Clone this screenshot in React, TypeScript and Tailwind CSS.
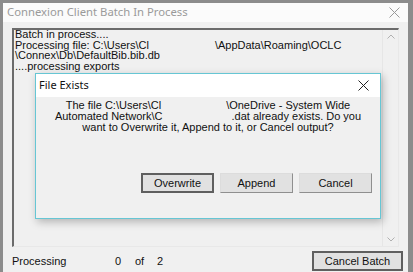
const ui = { fontFamily: '"Liberation Sans", Arial, sans-serif' };
const seg = { fontFamily: '"Noto Sans", "Open Sans", sans-serif' };

function CloseX({ className }: { className?: string }) {
  return (
    <svg width="11" height="11" viewBox="0 0 11 11" className={className}>
      <path d="M0.5 0.5 L10.5 10.5 M10.5 0.5 L0.5 10.5" stroke="currentColor" strokeWidth="1" />
    </svg>
  );
}

function WinButton({ label, primary = false, className = "" }: { label: string; primary?: boolean; className?: string }) {
  return (
    <button
      className={
        "flex h-[20px] items-center justify-center bg-[#e1e1e1] text-[11px] text-[#111] " +
        (primary
          ? "border-2 border-[#5f5f5f] "
          : "border border-t-[#dcdcdc] border-l-[#dcdcdc] border-r-[#8f8f8f] border-b-[#8f8f8f] ") +
        className
      }
      style={ui}
    >
      {label}
    </button>
  );
}

export default function App() {
  return (
    <div className="relative flex h-[272px] w-[413px] flex-col overflow-hidden border-l-[3px] border-r-[5px] border-t-[3px] border-[#8c8c8c] bg-[#f0f0f0]">
      {/* title bar */}
      <div className="flex h-[19px] items-center justify-between bg-[#fbfbfb] pl-[4px] pr-[8px]">
        <span className="text-[11.3px] text-[#9a9a9a]" style={seg}>
          Connexion Client Batch In Process
        </span>
        <CloseX className="text-[#9a9a9a]" />
      </div>

      {/* log box */}
      <div className="mx-[9px] mt-[6px] flex h-[219px] border-l-2 border-t-2 border-[#6b6b6b] border-r border-b border-r-[#e8e8e8] border-b-[#e8e8e8]">
        <div className="-mt-[1px] flex-1 pl-[1px] text-[11px] leading-[10.6px] text-[#111]" style={ui}>
          <div>Batch in process....</div>
          <div>
            Processing file: C:\Users\Cl<span className="inline-block w-[66px]" />\AppData\Roaming\OCLC
          </div>
          <div>\Connex\Db\DefaultBib.bib.db</div>
          <div>....processing exports</div>
        </div>
        <div className="flex w-[16px] flex-col items-center justify-between border-l border-[#e6e6e6] py-[4px] text-[#b0b0b0]">
          <svg width="8" height="5" viewBox="0 0 8 5">
            <path d="M0.5 4.5 L4 1 L7.5 4.5" fill="none" stroke="currentColor" strokeWidth="1" />
          </svg>
          <svg width="8" height="5" viewBox="0 0 8 5">
            <path d="M0.5 0.5 L4 4 L7.5 0.5" fill="none" stroke="currentColor" strokeWidth="1" />
          </svg>
        </div>
      </div>

      {/* status row */}
      <div className="mt-[4px] flex items-center pl-[9px] pr-[5px] text-[11px] text-[#111]" style={ui}>
        <span className="w-[103px]">Processing</span>
        <span className="w-[20px]">0</span>
        <span className="w-[22px]">of</span>
        <span>2</span>
        <WinButton label="Cancel Batch" primary className="ml-auto w-[91px]" />
      </div>

      {/* modal dialog */}
      <div className="absolute left-[32px] top-[70px] flex h-[146px] w-[346px] flex-col border border-[#66c6d4] bg-[#f0f0f0] shadow-[2px_3px_8px_rgba(0,0,0,0.25)]">
        <div className="flex h-[23px] items-center justify-between bg-white pl-[3px] pr-[11px]">
          <span className="text-[11px] text-[#111]" style={seg}>
            File Exists
          </span>
          <CloseX className="text-[#222]" />
        </div>
        <div className="mt-[3px] text-center text-[11px] leading-[11px] text-[#111]" style={ui}>
          <div>
            The file C:\Users\Cl<span className="inline-block w-[65px]" />\OneDrive - System Wide
          </div>
          <div>
            Automated Network\C<span className="inline-block w-[69px]" />.dat already exists. Do you
          </div>
          <div>want to Overwrite it, Append to it, or Cancel output?</div>
        </div>
        <div className="mt-auto mb-[25px] flex justify-end gap-[6px] pr-[8px]">
          <WinButton label="Overwrite" primary className="w-[73px]" />
          <WinButton label="Append" className="w-[73px]" />
          <WinButton label="Cancel" className="w-[73px]" />
        </div>
      </div>
    </div>
  );
}
